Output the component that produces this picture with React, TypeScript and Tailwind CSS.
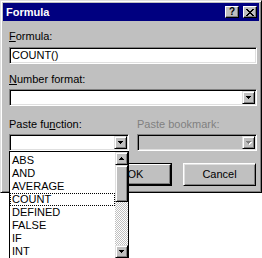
import React from "react";

const Arrow = ({ disabled = false }: { disabled?: boolean }) => (
  <svg width="6" height="4" viewBox="0 0 6 4" shapeRendering="crispEdges">
    {disabled && (
      <g fill="#ffffff">
        <rect x="1" y="1" width="5" height="1" />
        <rect x="2" y="2" width="3" height="1" />
        <rect x="3" y="3" width="1" height="1" />
      </g>
    )}
    <g fill={disabled ? "#808080" : "#000000"}>
      <rect x="0" y="0" width="5" height="1" />
      <rect x="1" y="1" width="3" height="1" />
      <rect x="2" y="2" width="1" height="1" />
    </g>
  </svg>
);

const UpArrow = () => (
  <svg width="5" height="3" viewBox="0 0 5 3" shapeRendering="crispEdges">
    <g fill="#000">
      <rect x="2" y="0" width="1" height="1" />
      <rect x="1" y="1" width="3" height="1" />
      <rect x="0" y="2" width="5" height="1" />
    </g>
  </svg>
);

const items = ["ABS", "AND", "AVERAGE", "COUNT", "DEFINED", "FALSE", "IF", "INT"];

export default function App() {
  return (
    <div className="relative w-[262px] h-[258px] overflow-hidden bg-white text-[11px] leading-[13px] text-black font-['Liberation_Sans',Arial,sans-serif]">
      {/* Window */}
      <div className="flex h-[193px] w-[262px] flex-col border border-t-[#dfdfdf] border-l-[#dfdfdf] border-r-black border-b-black bg-[#c0c0c0] p-[2px] shadow-[inset_1px_1px_0_#ffffff,inset_-1px_-1px_0_#808080]">
        {/* Title bar */}
        <div className="flex h-[18px] items-center bg-[#000080] pl-[3px] pr-[2px]">
          <span className="flex-1 text-[11px] font-bold text-white">Formula</span>
          <div className="flex h-[12px] w-[14px] items-center justify-center border border-t-white border-l-white border-r-black border-b-black bg-[#c0c0c0] text-[10px] font-bold leading-[10px] shadow-[inset_-1px_-1px_0_#808080]">
            ?
          </div>
          <div className="ml-[4px] flex h-[12px] w-[14px] items-center justify-center border border-t-white border-l-white border-r-black border-b-black bg-[#c0c0c0] shadow-[inset_-1px_-1px_0_#808080]">
            <svg width="8" height="7" viewBox="0 0 8 7" shapeRendering="crispEdges">
              <g fill="#000">
                <rect x="0" y="0" width="2" height="1" />
                <rect x="6" y="0" width="2" height="1" />
                <rect x="1" y="1" width="2" height="1" />
                <rect x="5" y="1" width="2" height="1" />
                <rect x="2" y="2" width="4" height="1" />
                <rect x="3" y="3" width="2" height="1" />
                <rect x="2" y="4" width="4" height="1" />
                <rect x="1" y="5" width="2" height="1" />
                <rect x="5" y="5" width="2" height="1" />
                <rect x="0" y="6" width="2" height="1" />
                <rect x="6" y="6" width="2" height="1" />
              </g>
            </svg>
          </div>
        </div>

        {/* Body */}
        <div className="flex flex-col pl-[6px] pt-[9px]">
          <div className="h-[13px]">
            <span className="underline underline-offset-[1px]">F</span>ormula:
          </div>
          <div className="mt-[4px] flex h-[17px] w-[248px] items-center border border-t-[#808080] border-l-[#808080] border-r-white border-b-white bg-white pl-[2px] shadow-[inset_1px_1px_0_#000,inset_-1px_-1px_0_#dfdfdf]">
            COUNT()
          </div>

          <div className="mt-[9px] h-[13px]">
            <span className="underline underline-offset-[1px]">N</span>umber format:
          </div>
          <div className="mt-[3px] flex h-[17px] w-[248px] items-center justify-end border border-t-[#808080] border-l-[#808080] border-r-white border-b-white bg-white p-[1px] shadow-[inset_1px_1px_0_#000,inset_-1px_-1px_0_#dfdfdf]">
            <div className="flex h-[13px] w-[13px] items-center justify-center border border-t-[#dfdfdf] border-l-[#dfdfdf] border-r-black border-b-black bg-[#c0c0c0] shadow-[inset_1px_1px_0_#ffffff,inset_-1px_-1px_0_#808080]">
              <Arrow />
            </div>
          </div>

          <div className="mt-[12px] flex">
            <div className="flex w-[120px] flex-col">
              <div className="h-[13px]">
                Paste fu<span className="underline underline-offset-[1px]">n</span>ction:
              </div>
              <div className="mt-[3px] flex h-[17px] w-[120px] items-center justify-end border border-t-[#808080] border-l-[#808080] border-r-white border-b-white bg-white p-[1px] shadow-[inset_1px_1px_0_#000,inset_-1px_-1px_0_#dfdfdf]">
                <div className="flex h-[13px] w-[13px] items-center justify-center border border-t-[#dfdfdf] border-l-[#dfdfdf] border-r-black border-b-black bg-[#c0c0c0] shadow-[inset_1px_1px_0_#ffffff,inset_-1px_-1px_0_#808080]">
                  <Arrow />
                </div>
              </div>
            </div>
            <div className="ml-[8px] flex w-[120px] flex-col">
              <div className="h-[13px] text-[#808080]">Paste bookmark:</div>
              <div className="mt-[3px] flex h-[17px] w-[120px] items-center justify-end border border-t-[#808080] border-l-[#808080] border-r-white border-b-white bg-[#c0c0c0] p-[1px] shadow-[inset_1px_1px_0_#000,inset_-1px_-1px_0_#dfdfdf]">
                <div className="flex h-[13px] w-[13px] items-center justify-center border border-t-[#dfdfdf] border-l-[#dfdfdf] border-r-black border-b-black bg-[#c0c0c0] shadow-[inset_1px_1px_0_#ffffff,inset_-1px_-1px_0_#808080]">
                  <Arrow disabled />
                </div>
              </div>
            </div>
          </div>

          <div className="mt-[12px] flex">
            <div className="ml-[90px] flex h-[23px] w-[73px] items-center justify-center border border-black">
              <div className="flex h-full w-full items-center justify-center border border-t-white border-l-white border-r-black border-b-black shadow-[inset_-1px_-1px_0_#808080]">
                OK
              </div>
            </div>
            <div className="ml-[11px] flex h-[23px] w-[73px] items-center justify-center border border-t-white border-l-white border-r-black border-b-black shadow-[inset_1px_1px_0_#dfdfdf,inset_-1px_-1px_0_#808080]">
              Cancel
            </div>
          </div>
        </div>
      </div>

      {/* Dropped-down list */}
      <div className="absolute left-[9px] top-[151px] flex h-[108px] w-[120px] border border-black bg-white">
        <div className="flex flex-1 flex-col pt-[2px]">
          {items.map((it) => (
            <div
              key={it}
              className={
                it === "COUNT"
                  ? "h-[13px] border border-dotted border-black pl-[1px] leading-[11px]"
                  : "h-[13px] pl-[2px]"
              }
            >
              {it}
            </div>
          ))}
        </div>
        <div className="flex w-[13px] flex-col bg-[repeating-conic-gradient(#c0c0c0_0%_25%,#ffffff_0%_50%)] bg-[length:2px_2px]">
          <div className="flex h-[13px] w-[13px] items-center justify-center border border-t-[#dfdfdf] border-l-[#dfdfdf] border-r-black border-b-black bg-[#c0c0c0] shadow-[inset_1px_1px_0_#ffffff,inset_-1px_-1px_0_#808080]">
            <UpArrow />
          </div>
          <div className="h-[37px] w-[13px] border border-t-[#dfdfdf] border-l-[#dfdfdf] border-r-black border-b-black bg-[#c0c0c0] shadow-[inset_1px_1px_0_#ffffff,inset_-1px_-1px_0_#808080]" />
          <div className="flex-1" />
          <div className="flex h-[13px] w-[13px] items-center justify-center border border-t-[#dfdfdf] border-l-[#dfdfdf] border-r-black border-b-black bg-[#c0c0c0] shadow-[inset_1px_1px_0_#ffffff,inset_-1px_-1px_0_#808080]">
            <Arrow />
          </div>
        </div>
      </div>
    </div>
  );
}
